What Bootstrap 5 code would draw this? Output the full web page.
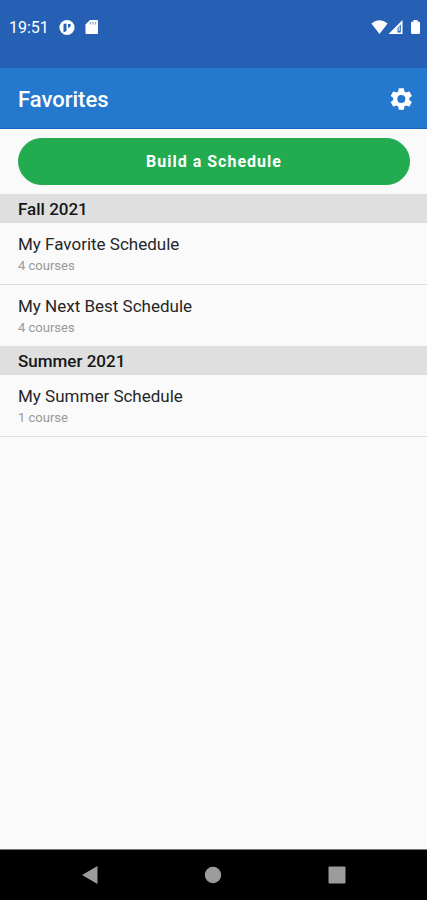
<!DOCTYPE html>
<html lang="en">
<head>
<meta charset="utf-8">
<meta name="viewport" content="width=device-width, initial-scale=1">
<title>Favorites</title>
<link href="https://cdn.jsdelivr.net/npm/bootstrap@5.3.0/dist/css/bootstrap.min.css" rel="stylesheet">
<style>
  body { font-family: Roboto, "Liberation Sans", sans-serif; background: #fafafa; color: #212121; }
  .status-bar { background: #2560b4; height: 68px; padding: 18px 7px 0 9px; font-size: 16px; line-height: 20px; }
  .status-bar svg { display: block; }
  .app-bar { background: #2478ce; height: 61px; padding: 3px 14px 0 18px; border-bottom: 1px solid #1766bd; }
  .app-bar h1 { font-size: 22px; line-height: 28px; font-weight: 500; }
  .build-wrap { padding: 9px 17px 9px 18px; }
  .btn-build { --bs-btn-color: #fff; --bs-btn-bg: #22ab4f; --bs-btn-border-color: #22ab4f; --bs-btn-hover-color: #fff; --bs-btn-hover-bg: #1d9645; height: 47px; font-size: 16px; line-height: 20px; font-weight: 700; letter-spacing: 1px; }
  .term { background: #dfdfdf; color: #161616; padding: 3px 18px 2px; font-size: 17px; line-height: 24px; font-weight: 500; }
  .schedules { --bs-list-group-bg: transparent; --bs-list-group-border-color: #dcdcdc; }
  .schedules .list-group-item { padding: 9px 18px 8px; }
  .schedule-name { font-size: 17px; line-height: 24px; color: #262626; }
  .schedule-count { font-size: 13px; line-height: 20px; color: #999; }
  .system-nav { background: #000; height: 51px; padding: 0 28px; border-top: 1px solid #777; }
  .system-nav svg, .app-bar svg { display: block; }
</style>
</head>
<body class="d-flex flex-column min-vh-100">
  <div class="status-bar d-flex justify-content-between align-items-start text-white">
    <div class="d-flex align-items-center">
      <span>19:51</span>
      <svg class="ms-2 me-2" width="20" height="18" viewBox="2 0 20 18" aria-hidden="true"><circle cx="12" cy="8.500" r="7.600" fill="#fff"/><path d="M8.500 5.500q1.500-1.500 3-.7v7.200l-3 1.500zM13 5h2.600v2.300l-1.600 1.500H13z" fill="#2560b4"/></svg>
      <svg width="13" height="18" viewBox="0 0 13 18" aria-hidden="true"><path d="M5 1h7q1 0 1 1v12q0 1-1 1H1.500q-1 0-1-1V5.500z" fill="#fff"/><path d="M5.500 3v2.500M8 3v2.500M10.500 3v2.500" stroke="#8fadd8" stroke-width="1.300"/></svg>
    </div>
    <div class="d-flex align-items-center">
      <svg width="17" height="18" viewBox="0 0 17 18" aria-hidden="true"><path d="M.4 5.500Q8.500-.8 16.600 5.500L8.500 16z" fill="#fff"/></svg>
      <svg class="me-2" width="15" height="18" viewBox="0 0 15 18" aria-hidden="true"><path d="M14.500 2v14H.5z" fill="#fff"/><path d="M12.800 6.500v8H9.600V9.800z" fill="#2560b4"/><path d="M11.200 8.500v4.500" stroke="#fff"/></svg>
      <svg width="9" height="18" viewBox="0 0 9 18" aria-hidden="true"><path d="M2.500 2h4v1.500h1Q9 3.500 9 5v9.500Q9 16 7.500 16h-6Q0 16 0 14.500V5q0-1.500 1.500-1.500h1z" fill="#fff"/></svg>
    </div>
  </div>

  <header class="app-bar d-flex justify-content-between align-items-center text-white">
    <h1 class="mb-0">Favorites</h1>
    <button type="button" class="btn p-0 border-0 text-white" aria-label="Settings">
      <svg width="24" height="26" viewBox="0 0 24 24" fill="currentColor" aria-hidden="true"><path transform="translate(12.300 11) scale(1.120) translate(-12 -12)" d="M19.140 12.940c.04-.3.060-.610.060-.940 0-.320-.020-.640-.070-.940l2.030-1.580c.18-.14.23-.41.12-.61l-1.920-3.320c-.12-.22-.37-.29-.59-.22l-2.390.96c-.5-.38-1.030-.7-1.620-.94l-.36-2.540c-.04-.24-.24-.41-.48-.41h-3.840c-.24 0-.43.17-.47.41l-.36 2.540c-.59.24-1.130.57-1.620.94l-2.390-.96c-.22-.08-.47 0-.59.22L2.740 8.870c-.12.21-.08.47.12.61l2.030 1.580c-.05.3-.09.63-.09.94s.02.64.07.94l-2.030 1.580c-.18.14-.23.41-.12.61l1.920 3.320c.12.22.37.29.59.22l2.390-.96c.5.38 1.030.7 1.620.94l.36 2.540c.05.24.24.41.48.41h3.840c.24 0 .44-.17.47-.41l.36-2.540c.59-.24 1.130-.56 1.620-.94l2.390.96c.22.08.47 0 .59-.22l1.920-3.320c.12-.22.07-.47-.12-.61zM12 15.600A3.600 3.600 0 1 1 12 8.400a3.600 3.600 0 0 1 0 7.200z"/></svg>
    </button>
  </header>

  <main class="flex-grow-1">
    <div class="build-wrap">
      <button type="button" class="btn btn-build rounded-pill w-100">Build a Schedule</button>
    </div>
    <section>
      <h2 class="term mb-0">Fall 2021</h2>
      <ul class="schedules list-group list-group-flush">
        <li class="list-group-item">
          <div class="schedule-name">My Favorite Schedule</div>
          <div class="schedule-count">4 courses</div>
        </li>
        <li class="list-group-item">
          <div class="schedule-name">My Next Best Schedule</div>
          <div class="schedule-count">4 courses</div>
        </li>
      </ul>
    </section>
    <section>
      <h2 class="term mb-0">Summer 2021</h2>
      <ul class="schedules list-group list-group-flush border-bottom">
        <li class="list-group-item">
          <div class="schedule-name">My Summer Schedule</div>
          <div class="schedule-count">1 course</div>
        </li>
      </ul>
    </section>
  </main>

  <nav class="system-nav d-flex justify-content-around align-items-center" aria-label="System">
    <button type="button" class="btn p-0 border-0" aria-label="Back"><svg width="18" height="20" viewBox="0 0 18 20"><path d="M1 10 16.500 1v18z" fill="#9c9c9c"/></svg></button>
    <button type="button" class="btn p-0 border-0" aria-label="Home"><svg width="18" height="18" viewBox="0 0 18 18"><circle cx="9" cy="9" r="8.200" fill="#9c9c9c"/></svg></button>
    <button type="button" class="btn p-0 border-0" aria-label="Recent apps"><svg width="18" height="18" viewBox="0 0 18 18"><rect x=".5" y=".5" width="17" height="17" rx="1" fill="#9c9c9c"/></svg></button>
  </nav>
<script src="https://cdn.jsdelivr.net/npm/bootstrap@5.3.0/dist/js/bootstrap.bundle.min.js"></script>
</body>
</html>
